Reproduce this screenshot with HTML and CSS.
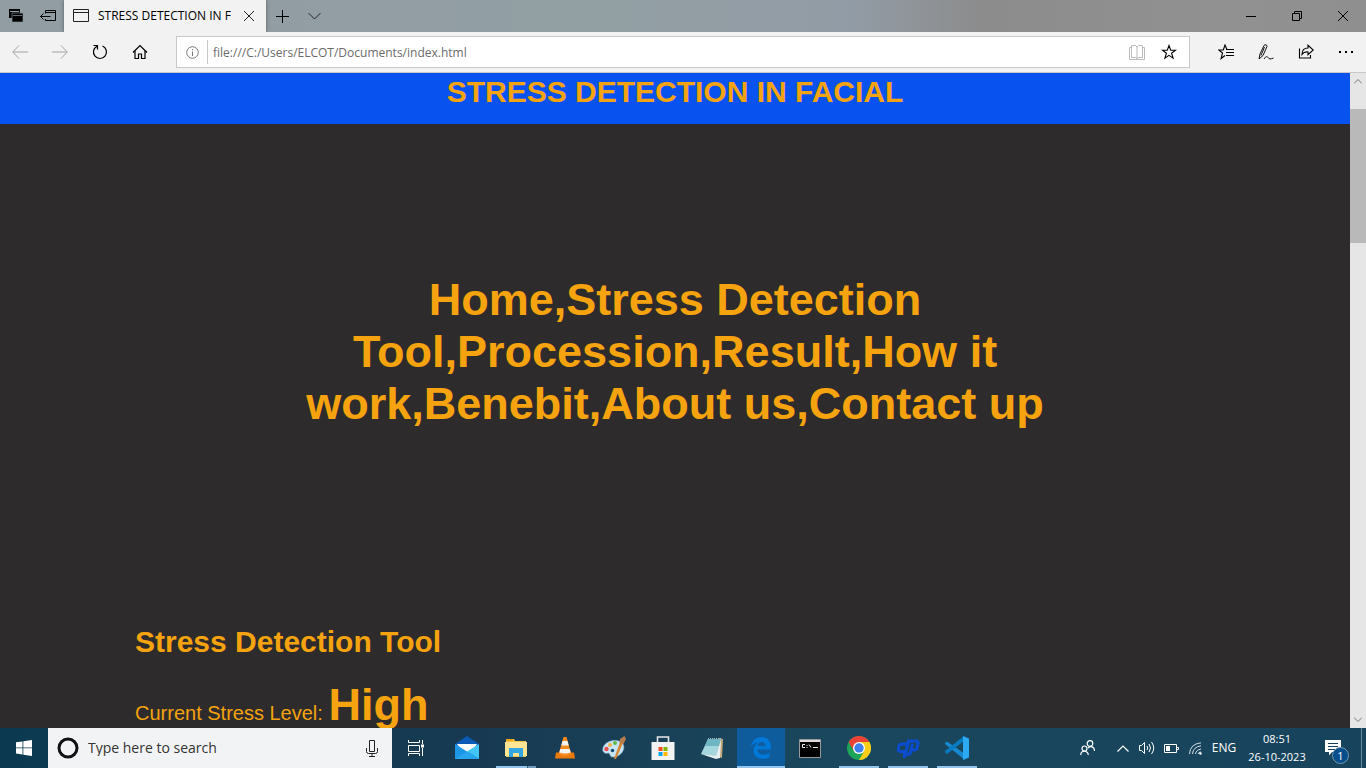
FILE: index.html
```html
<!DOCTYPE html>
<html lang="en">
<head>
<meta charset="utf-8">
<title>Stress Detection in Facial</title>
<link rel="stylesheet" href="styles.css">
</head>
<body>
<header class="titlebar">
  <button class="tab-tool" aria-label="Tabs set aside"><svg width="16" height="16" viewBox="0 0 16 16"><path d="M1 1h11v9H1z" fill="#000"/><path d="M2 3.500h9" stroke="#929da4"/><path d="M4 5h11v9H4z" fill="#000" stroke="#929da4" stroke-width=".6"/><path d="M5 7.500h9" stroke="#929da4" stroke-width=".7"/></svg></button>
  <button class="tab-tool" aria-label="Set tabs aside"><svg width="16" height="16" viewBox="0 0 16 16" fill="none" stroke="#000"><path d="M5.500 5.500v-3h10v10h-10V11M5.500 4.500h10M0.500 8.500h10M3.500 5.500l-3 3 3 3"/></svg></button>
  <div class="tab">
    <svg class="tab-page" width="16" height="14" viewBox="0 0 16 14" fill="none" stroke="#222"><path d="M.5.5h15v12H.5zM.5 3.500h15"/></svg>
    <span class="tab-name">STRESS DETECTION IN FACIAL</span>
    <button class="tab-close" aria-label="Close tab"><svg width="10" height="10" viewBox="0 0 10 10" stroke="#222"><path d="M0 0l10 10M10 0L0 10"/></svg></button>
  </div>
  <button class="tab-new" aria-label="New tab"><svg width="13" height="13" viewBox="0 0 13 13" stroke="#000"><path d="M6.500 0v13M0 6.500h13"/></svg></button>
  <button class="tab-new" aria-label="Tab previews"><svg width="13" height="8" viewBox="0 0 13 8" fill="none" stroke="#222"><path d="M.5 1l6 6 6-6"/></svg></button>
  <div class="window-buttons">
    <button aria-label="Minimize"><svg width="10" height="10" viewBox="0 0 10 10" stroke="#000"><path d="M0 5.500h10"/></svg></button>
    <button aria-label="Restore"><svg width="10" height="10" viewBox="0 0 10 10" fill="none" stroke="#000"><path d="M.5 2.500h7v7h-7zM2.500 2.500v-2h7v7h-2"/></svg></button>
    <button aria-label="Close"><svg width="10" height="10" viewBox="0 0 10 10" stroke="#000"><path d="M0 0l10 10M10 0L0 10"/></svg></button>
  </div>
</header>

<nav class="toolbar" aria-label="Browser">
  <div class="nav-buttons">
    <button aria-label="Back"><svg width="16" height="14" viewBox="0 0 16 14" fill="none" stroke="#a0a0a0"><path d="M1 7h15M7 .5L.7 7 7 13.500"/></svg></button>
    <button aria-label="Forward"><svg width="16" height="14" viewBox="0 0 16 14" fill="none" stroke="#a0a0a0"><path d="M0 7h15M9 .5L15.300 7 9 13.500"/></svg></button>
    <button aria-label="Refresh"><svg width="16" height="16" viewBox="0 0 16 16" fill="none" stroke="#000" stroke-width="1.200"><path d="M10.500 2A6.500 6.500 0 1 1 5 2.200M1.500 1.500H5.500V5.500"/></svg></button>
    <button aria-label="Home"><svg width="16" height="16" viewBox="0 0 16 16" fill="none" stroke="#000" stroke-width="1.200"><path d="M1 8.500l7-7 7 7M3 7v7.500h3.500V10h3v4.500H13V7"/></svg></button>
  </div>
  <div class="address">
    <svg width="13" height="13" viewBox="0 0 13 13" fill="none" stroke="#777"><circle cx="6.500" cy="6.500" r="5.800"/><path d="M6.500 5.500v4.500M6.500 3v1.200"/></svg>
    <input class="address-input" type="text" aria-label="Address" value="file:///C:/Users/ELCOT/Documents/index.html">
    <button aria-label="Reading view"><svg width="16" height="15" viewBox="0 0 16 15" fill="none" stroke="#bbb"><path d="M2.500.5h4L8 2l1.500-1.500h4v12h-4L8 13.500l-1.500-1h-4zM8 2v12M2.500 2.500h-2v12h15v-12h-2"/></svg></button>
    <button aria-label="Add to favorites"><svg width="16" height="16" viewBox="0 0 16 16" fill="none" stroke="#000" stroke-width="1.100"><path d="M8 1.500l1.700 4.700h4.800l-3.900 3 1.500 5L8 11.300l-4.100 2.900 1.500-5-3.900-3h4.800z"/></svg></button>
  </div>
  <div class="hub-buttons">
    <button aria-label="Favorites hub"><svg width="16" height="16" viewBox="0 0 16 16" fill="none" stroke="#000" stroke-width="1.100"><path d="M9 5.800L7 1 5.300 6H.8l3.700 3-1.400 5.500L7 11.500M8 5.500h8M8 8.500h8M8 11.500h8"/></svg></button>
    <button aria-label="Add notes"><svg width="16" height="16" viewBox="0 0 16 16" fill="none" stroke="#111"><path d="M1 15l1-5L6 1.500c1-1.500 3.500-.5 3 1L5 11.500 1 15M6.500 3L3 11.500M6 15c2-3 3-3 4-1.500s2.500 2 5.500.5"/></svg></button>
    <button aria-label="Share"><svg width="16" height="16" viewBox="0 0 16 16" fill="none" stroke="#000" stroke-width="1.100"><path d="M1.500 4.500v9.500h11V11M4 10.500C4 6 6 4 10 4V1.300L15.300 6 10 10.700V8C7 7.500 5.500 8.200 4 10.500z"/></svg></button>
    <button aria-label="Settings and more"><svg width="14" height="4" viewBox="0 0 14 4" fill="#000"><path d="M0 1h2v2H0zM6 1h2v2H6zM12 1h2v2h-2z"/></svg></button>
  </div>
</nav>

<div class="viewport">
  <main class="page">
    <header class="page-header"><h1>STRESS DETECTION IN FACIAL</h1></header>
    <section class="hero"><h2>Home,Stress Detection Tool,Procession,Result,How it work,Benebit,About us,Contact up</h2></section>
    <section class="tool">
      <h2>Stress Detection Tool</h2>
      <p>Current Stress Level: <strong>High</strong></p>
    </section>
  </main>
  <div class="scrollbar" aria-hidden="true">
    <svg width="8" height="5" viewBox="0 0 8 5" fill="none" stroke="#777"><path d="M0 4.500l4-4 4 4"/></svg>
    <div class="scroll-track"><div class="scroll-thumb"></div></div>
    <svg width="8" height="5" viewBox="0 0 8 5" fill="none" stroke="#777"><path d="M0 .5l4 4 4-4"/></svg>
  </div>
</div>

<footer class="taskbar">
  <button class="task" aria-label="Start"><svg width="16" height="16" viewBox="0 0 16 16" fill="#fff"><path d="M0 2.300l6.500-.9v6.100H0zM7.300 1.200L16 0v7.500H7.300zM0 8.300h6.500v6.200L0 13.600zM7.300 8.300H16V16l-8.700-1.300z"/></svg></button>
  <div class="search">
    <svg width="22" height="22" viewBox="0 0 22 22" fill="none"><circle cx="11" cy="11" r="9" stroke="#111" stroke-width="3"/></svg>
    <input type="text" aria-label="Search" placeholder="Type here to search">
    <button aria-label="Voice search"><svg width="12" height="17" viewBox="0 0 12 17" fill="none" stroke="#222"><path d="M3.500.5h5v11h-5zM.5 8v3.500q0 2 2 2h7q2 0 2-2V8M6 13.500v3M3 16.500h6"/></svg></button>
  </div>
  <button class="task" aria-label="Task view"><svg width="17" height="16" viewBox="0 0 17 16" fill="none" stroke="#fff"><path d="M.5 0v2.500h11V0M.5 5.500h11v6H.5zM.5 16v-2.500h11V16M14.500 0v4M14.500 8v8"/><path d="M13 4.500h3v3h-3z" fill="#fff" stroke="none"/></svg></button>
  <div class="apps">
    <button class="task" aria-label="Mail"><svg width="24" height="24" viewBox="0 0 24 24"><path d="M0 8L12 0l12 8v5H0z" fill="#0b5ab5"/><path d="M2 8h20l-5 8H7z" fill="#fff"/><path d="M0 23V8l12 7.500L24 23z" fill="#1e96e6"/><path d="M24 8v15L12 15.500z" fill="#42c4f7"/><path d="M0 23l12-7.500L24 23z" fill="#27a5ee"/></svg></button>
    <button class="task open grouped" aria-label="File Explorer"><svg width="22" height="20" viewBox="0 0 22 20"><path d="M1 1h8l1 2h11v16H1z" fill="#f2c94e"/><path d="M0 4h22v14H0z" fill="#ffe594"/><path d="M1 1h7v2H1z" fill="#e8a814"/><path d="M4 10h14v9h-4v-4H8v4H4z" fill="#35a7e0"/></svg></button>
    <button class="task" aria-label="VLC"><svg width="20" height="24" viewBox="0 0 20 24"><path d="M1 16.500h18l1 6H0z" fill="#e9780d"/><path d="M8.500 1h3l4.800 17q-6.300 4-12.600 0z" fill="#f68b1e"/><path d="M7.500 5h5l1.200 4.500H6.300zM5.300 13h9.400l1 3.500q-5.700 2-11.400 0z" fill="#f3f3f3"/></svg></button>
    <button class="task" aria-label="Paint"><svg width="24" height="24" viewBox="0 0 24 24"><path d="M1 12C3 4 17 2 21 8c3 6-3 13-10 13-4 0-2-4-5-4-3 1-6-1-5-5z" fill="#c7e5f4" stroke="#8fbad4" stroke-width=".7"/><circle cx="4.500" cy="13" r="2.200" fill="#e65049"/><circle cx="8" cy="9" r="2" fill="#f3b24a"/><circle cx="13" cy="7" r="2" fill="#65b947"/><circle cx="10.500" cy="14.500" r="1.800" fill="#164b75"/><path d="M12 23L18 6l3 1-7 16z" fill="#d78736"/><path d="M17.500 7l.5-4 4.500-3 1.500 3L21.500 8z" fill="#b77b4c"/></svg></button>
    <button class="task" aria-label="Store"><svg width="24" height="24" viewBox="0 0 24 24"><path d="M6.500 7V1h11v6" fill="none" stroke="#e8e8e8" stroke-width="1.600"/><path d="M.5 6h23v18h-23z" fill="#f3f3f3"/><path d="M7.500 11h4v4h-4z" fill="#f25022"/><path d="M12.500 11h4v4h-4z" fill="#7fba00"/><path d="M7.500 16h4v4h-4z" fill="#00a4ef"/><path d="M12.500 16h4v4h-4z" fill="#ffb900"/></svg></button>
    <button class="task" aria-label="Notepad"><svg width="24" height="24" viewBox="0 0 24 24"><path d="M19 2l4 1-1 19-6-2z" fill="#c3a878"/><path d="M8 3h13l-5 18L1 18z" fill="#a4d6de"/><path d="M8 3h13l-2 7H5z" fill="#6fb4c2"/><path d="M1 18l15 2 5-16-1 18-4 1z" fill="#e9eff0"/><path d="M8 2.500h14" stroke="#a8babf" stroke-dasharray="1 1"/></svg></button>
    <button class="task active" aria-label="Microsoft Edge"><svg width="22" height="22" viewBox="0 0 22 22"><path d="M1 9.500C2.300 3 6.500 0 11.500 0 17.500 0 21 4.500 21 10v2.500H7.500c.3 6 7.500 6 12 3.200v4.500C12 24 3.500 21 3.500 13.500c0-4 2-6.700 5-8C5 5.700 2.500 7.500 1 9.500zM7.700 9h7.600c0-5.500-7-5-7.600 0z" fill="#0078d7" fill-rule="evenodd"/></svg></button>
    <button class="task" aria-label="Command Prompt"><svg width="22" height="19" viewBox="0 0 22 19"><path d="M.5.5h21v18H.5z" fill="#000" stroke="#999"/><path d="M1 1h20v2H1z" fill="#ddd"/><path d="M6 5.500H3.500v3H6M8 6v1M8 8v1M10 5.500l2 3M14 8.500h5" fill="none" stroke="#eee"/></svg></button>
    <button class="task open" aria-label="Google Chrome"><svg width="24" height="24" viewBox="0 0 24 24"><circle cx="12" cy="12" r="12" fill="#1da35a"/><path d="M12 12L1.600 6A12 12 0 0 1 22.400 6z" fill="#ea4335"/><path d="M12 6h10.400A12 12 0 0 1 12 24l5.200-9z" fill="#fbcd18"/><path d="M1.600 6L6.800 15 12 6z" fill="#ea4335"/><circle cx="12" cy="12" r="6" fill="#fff"/><circle cx="12" cy="12" r="4.700" fill="#3f80ed"/></svg></button>
    <button class="task open" aria-label="Code editor"><svg width="24" height="20" viewBox="0 0 24 20" fill="none" stroke="#0b4cd0" stroke-width="3"><path d="M10.500 6H5.500Q3.500 6 3 8l-.7 3q-.3 2.500 2 2.500H10L12.500 3H20q2.500 0 2 2.500L21.300 9q-.5 3-3 3H15.500M16.500 5.500L14 16H10.500L8.500 18.500v-5"/></svg></button>
    <button class="task open" aria-label="Visual Studio Code"><svg width="24" height="24" viewBox="0 0 24 24"><path d="M0 7l2-1.500L20 18v6L0 8z" fill="#168bd0"/><path d="M0 16l2 2L19 5V0L0 15z" fill="#087abf"/><path d="M18 0l6 2.500v19L18 24z" fill="#2ca9f2"/></svg></button>
  </div>
  <div class="tray">
    <button class="task" aria-label="People"><svg width="15" height="16" viewBox="0 0 15 16" fill="none" stroke="#fff" stroke-width="1.200"><circle cx="10" cy="3.500" r="2.800"/><circle cx="4.500" cy="8.500" r="2.500"/><path d="M.7 15c0-5 7.600-5 7.600 0M8 8c3-3 6.500-1 6.500 3"/></svg></button>
    <button class="tray-icon" aria-label="Show hidden icons"><svg width="12" height="7" viewBox="0 0 12 7" fill="none" stroke="#fff" stroke-width="1.200"><path d="M.5 6.500L6 1l5.500 5.500"/></svg></button>
    <button class="tray-icon" aria-label="Volume"><svg width="16" height="14" viewBox="0 0 16 14" fill="none" stroke="#fff"><path d="M.5 4.500h2l3-3v11l-3-3h-2zM8 5q1.500 2 0 4M10 3q3 4 0 8M12.500 1q4.500 6 0 12"/></svg></button>
    <button class="tray-icon" aria-label="Battery"><svg width="15" height="9" viewBox="0 0 15 9" fill="none" stroke="#fff"><path d="M.5.5h12v8H.5zM13 3.500h1.500v2H13"/><path d="M2 2h4v5H2z" fill="#fff" stroke="none"/></svg></button>
    <button class="tray-icon" aria-label="Network"><svg width="13" height="13" viewBox="0 0 13 13" fill="none" stroke="#d5e0e6"><path d="M.5 12Q1 2 12 .8M3.500 12Q4 5 12 3.800M6.500 12Q7 8 12 7M9 12q.5-2 3-2"/><circle cx="11.500" cy="11.500" r="1.200" fill="#fff" stroke="none"/></svg></button>
    <button class="language">ENG</button>
    <button class="clock"><time>08:51</time><span>26-10-2023</span></button>
    <button class="notices" aria-label="Notifications"><svg width="16" height="16" viewBox="0 0 16 16"><path d="M0 0h16v12H7l-3 3.500V12H0z" fill="#fff"/><path d="M3 3.500h10M3 6.500h10M3 9.500h7" stroke="#174057"/></svg><span class="badge">1</span></button>
    <button class="show-desktop" aria-label="Show desktop"></button>
  </div>
</footer>
</body>
</html>
```
FILE: styles.css
```css
* { box-sizing: border-box; }
body {
  margin: 0;
  height: 100vh;
  display: flex;
  flex-direction: column;
  overflow: hidden;
  font: 12px/16px "Open Sans", "Noto Sans", sans-serif;
  color: #000;
}
button {
  display: flex;
  align-items: center;
  justify-content: center;
  padding: 0;
  border: 0;
  background: none;
  font: inherit;
  color: inherit;
}
input {
  min-width: 0;
  flex: 1;
  border: 0;
  padding: 0;
  background: none;
  font: inherit;
  color: inherit;
  outline: 0;
}
svg { flex: none; }

/* Browser window */
.titlebar {
  flex: none;
  height: 32px;
  display: flex;
  background: linear-gradient(90deg, #919ca3, #929fa3 45%, #929ca6 62%, #8c8c8c 72%, #919191 90%, #8f8f8f);
}
.tab-tool, .tab-new { width: 32px; }
.tab {
  width: 202px;
  display: flex;
  align-items: center;
  gap: 9px;
  padding: 0 12px 0 9px;
  background: #f2f2f2;
  box-shadow: 0 0 4px #0006;
}
.tab-name {
  flex: 1;
  margin-right: 4px;
  overflow: hidden;
  white-space: nowrap;
}
.window-buttons {
  display: flex;
  margin-left: auto;
}
.window-buttons button { width: 46px; }
.toolbar {
  flex: none;
  height: 41px;
  display: flex;
  align-items: center;
  background: #f2f2f2;
  border-bottom: 1px solid #c8c8c8;
}
.nav-buttons, .hub-buttons { display: flex; }
.nav-buttons button, .hub-buttons button {
  width: 40px;
  height: 32px;
}
.nav-buttons { margin-right: 16px; }
.hub-buttons { margin-left: 16px; }
.address {
  flex: 1;
  height: 32px;
  display: flex;
  align-items: center;
  gap: 8px;
  padding: 0 8px 0 9px;
  background: #fff;
  border: 1px solid #c8c8c8;
}
.address-input {
  height: 24px;
  padding-left: 5px;
  border-left: 1px solid #c8c8c8;
  color: #6b6b6b;
}
.address button { width: 24px; height: 30px; }

/* Page */
.viewport {
  flex: 1;
  min-height: 0;
  display: flex;
}
.page {
  flex: 1;
  overflow: hidden;
  background: #2d2b2b;
  color: #f5a30f;
  font-family: "Liberation Sans", Arial, sans-serif;
}
.page h1, .page h2, .page p { margin: 0; }
.page-header {
  padding: 0 0 14px;
  background: #0853f0;
  text-align: center;
}
.page-header h1 { font-size: 30px; line-height: 37px; }
.hero {
  padding: 150px 10%;
  text-align: center;
}
.hero h2 { font-size: 45px; line-height: 52px; }
.tool { padding: 44px 10%; }
.tool h2 {
  margin-bottom: 20px;
  font-size: 30px;
  line-height: 35px;
}
.tool p { font-size: 20px; line-height: 52px; }
.tool strong { font-size: 45px; }
.scrollbar {
  width: 16px;
  display: flex;
  flex-direction: column;
  align-items: center;
  gap: 6px;
  padding: 6px 0;
  background: #e6e6e6;
}
.scroll-track {
  flex: 1;
  align-self: stretch;
  padding-top: 19px;
}
.scroll-thumb { height: 22%; min-height: 134px; background: #b9b9b9; }

/* Taskbar */
.taskbar {
  flex: none;
  height: 40px;
  display: flex;
  background: linear-gradient(90deg, #0b3a50, #173a52 35%, #1a475d 60%, #17445c);
  color: #fff;
}
.task {
  width: 48px;
  height: 40px;
  position: relative;
}
.search {
  width: 344px;
  display: flex;
  align-items: center;
  gap: 9px;
  padding: 0 14px 0 9px;
  background: #f2f3f5;
  color: #333;
  font-size: 14px;
}
.search input::placeholder { color: #333; opacity: 1; }
.apps {
  display: flex;
  gap: 1px;
  padding-left: 3px;
}
.open::after, .active::after {
  content: "";
  position: absolute;
  inset: auto 4px 0;
  height: 2px;
  background: #91c5ee;
}
.grouped::after { background: linear-gradient(90deg, #91c5ee 31px, #36576b 31px 32px, #6f9abb 32px); }
.active { background: #0e5c9b; }
.active::after { inset: auto 0 0; }
.tray {
  display: flex;
  margin-left: auto;
}
.tray-icon { width: 24px; }
.language { width: 34px; }
.clock {
  width: 70px;
  padding-left: 2px;
  flex-direction: column;
  line-height: 18px;
  font-size: 11px;
}
.notices { width: 50px; position: relative; padding-right: 6px; }
.badge {
  position: absolute;
  right: 12px;
  bottom: 4px;
  width: 17px;
  height: 17px;
  border: 1px solid #7697ab;
  border-radius: 50%;
  background: #064f8c;
  font-size: 11px;
  line-height: 15px;
}
.show-desktop { width: 5px; border-left: 1px solid #70899a; }
```
